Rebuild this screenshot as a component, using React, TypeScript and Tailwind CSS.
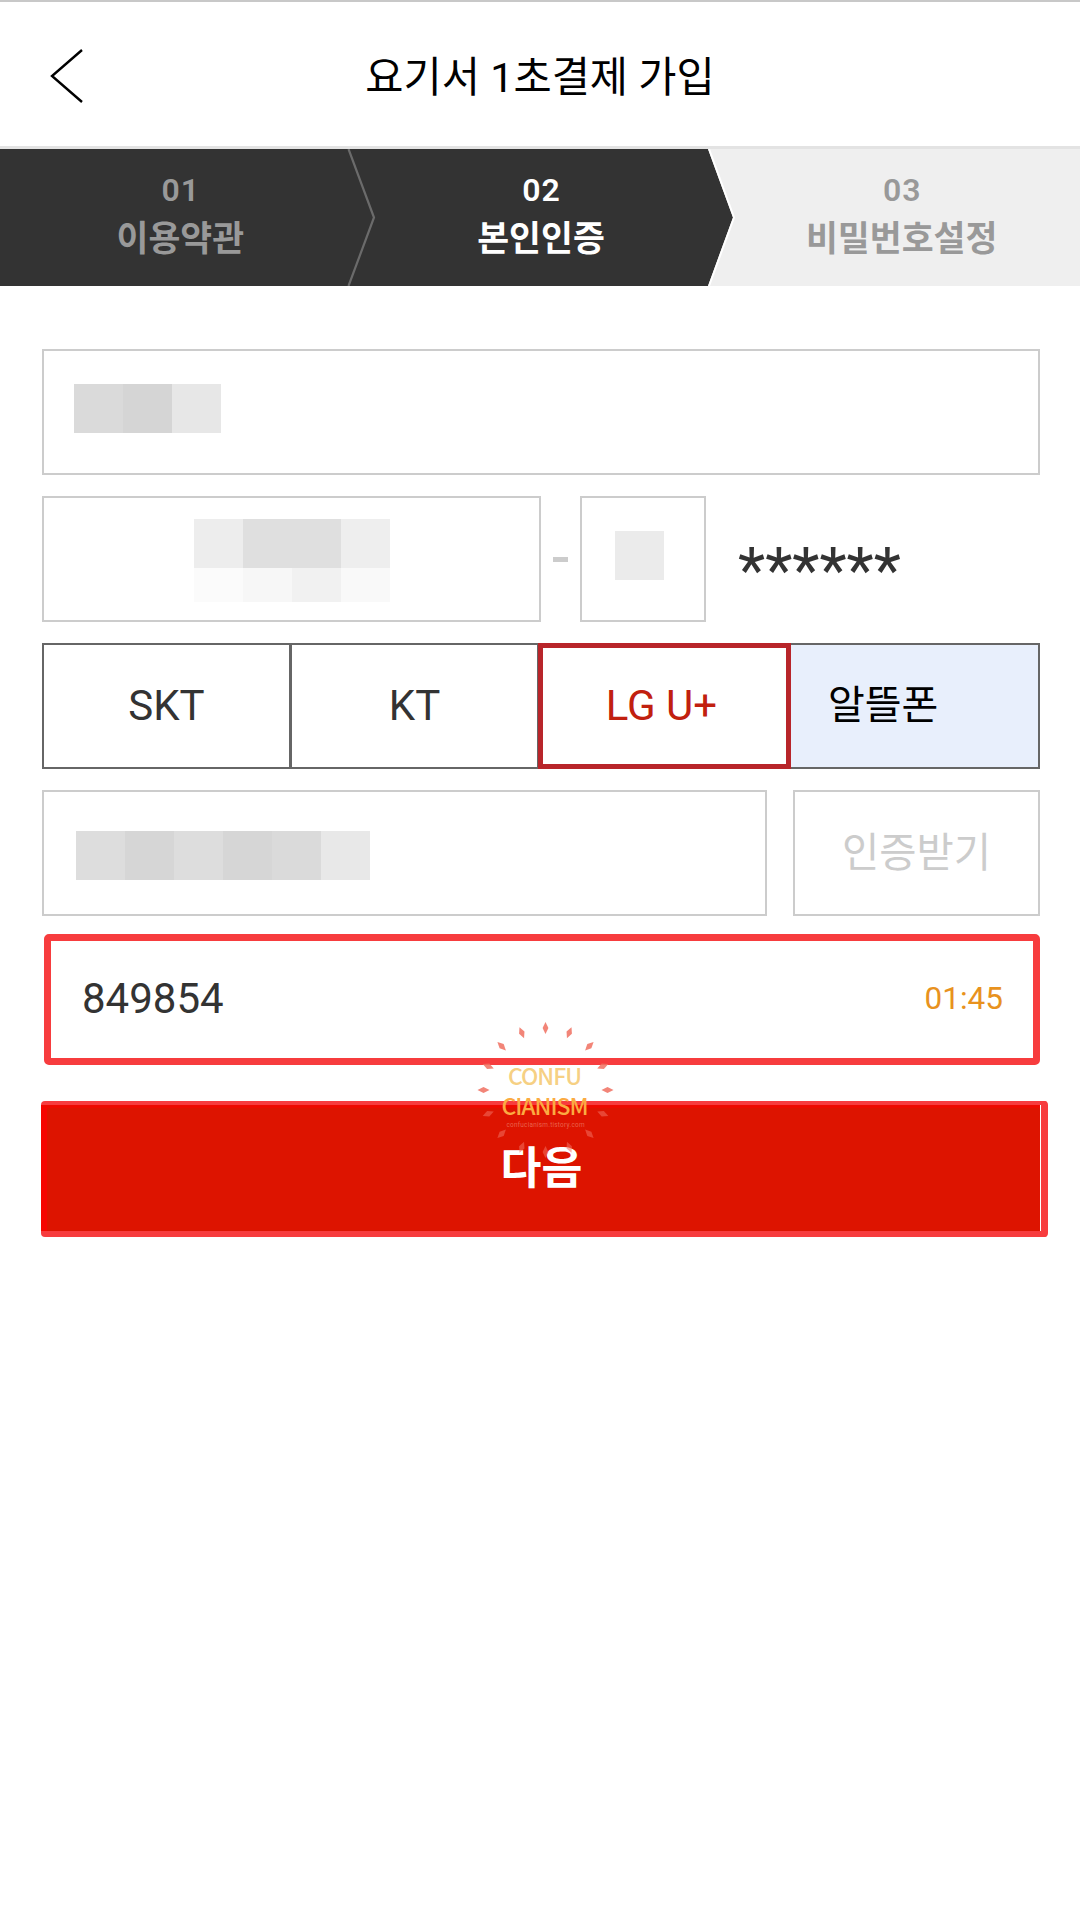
import React, { useState } from "react";

const steps = [
    { no: "01", label: "이용약관" },
    { no: "02", label: "본인인증" },
    { no: "03", label: "비밀번호설정" },
];

const carriers = ["SKT", "KT", "LG U+"];

// One shade per mosaic block
const nameBlocks = ["#dadada", "#d5d5d5", "#e7e7e7"];
const birthTop = ["#ededed", "#dfdfdf", "#dfdfdf", "#eeeeee"];
const birthBottom = ["#fbfbfb", "#f7f7f7", "#f1f1f1", "#f9f9f9"];
const phoneBlocks = ["#dddddd", "#d6d6d6", "#dddddd", "#d6d6d6", "#dadada", "#e8e8e8"];

function Mosaic({ shades, className = "h-[49px]" }: { shades: string[]; className?: string }) {
    return (
        <div className={`flex ${className}`}>
            {shades.map((shade, i) => (
                <span key={i} className="w-[49px] h-full" style={{ backgroundColor: shade }} />
            ))}
        </div>
    );
}

function Stepper() {
    return (
        <div className="relative h-[137px] bg-[#333333]">
            <svg className="absolute inset-0" width="1080" height="137" viewBox="0 0 1080 137" fill="none">
                <path d="M708 0L733 68.5L708 137H1080V0Z" fill="#efefef" />
                <path d="M709 0L734 68.5L709 137" stroke="#ffffff" strokeWidth="2" />
                <path d="M348.5 0L374 68.5L348.5 137" stroke="#6b6b6b" strokeWidth="2.2" />
            </svg>
            <ol className="relative grid grid-cols-3 h-full -mr-[2px] text-center font-bold">
                {steps.map((step, i) => (
                    <li key={step.no} className={i === 1 ? "text-white" : "text-[#999999]"}>
                        <p className="pt-[21px] pl-[1px] text-[32px] leading-[40px] tracking-[1px] font-semibold">{step.no}</p>
                        <p className="pt-[6px] text-[34.7px] leading-[46px]">{step.label}</p>
                    </li>
                ))}
            </ol>
        </div>
    );
}

function Watermark() {
    const rays = Array.from({ length: 16 }, (_, i) => i * 22.5);
    return (
        <svg
            className="absolute left-[475px] top-[1020px] pointer-events-none"
            width="141"
            height="141"
            viewBox="-70.5 -70 141 141"
        >
            {rays.map((angle) => (
                <path
                    key={angle}
                    d="M0 -68L2.9 -62L0 -56L-2.9 -62Z"
                    transform={`rotate(${angle})`}
                    fill="#f07060"
                    fillOpacity={angle > 90 && angle < 270 ? 0.55 : 0.85}
                />
            ))}
            <g textAnchor="middle" fontFamily="'Noto Sans CJK KR', sans-serif">
                <text x="-0.5" y="-5.5" fontSize="23" textLength="74" fontWeight="500" fill="#f6d083">CONFU</text>
                <text x="-0.5" y="25" fontSize="23" textLength="87" fontWeight="500" fill="#fbab42">CIANISM</text>
            </g>
            <text x="0" y="36.5" fontSize="6.4" textLength="78" textAnchor="middle" fill="#ee7a62" fillOpacity="0.8">
                confucianism.tistory.com
            </text>
        </svg>
    );
}

export default function App() {
    const [selected, setSelected] = useState("LG U+");

    return (
        <div className="relative w-[1080px] h-[1920px] bg-white overflow-hidden font-[Roboto,'Noto_Sans_CJK_KR',sans-serif] text-[#333333]">
            <header className="flex items-center h-[149px] border-t-2 border-t-[#c8c8c8] border-b-3 border-b-[#e3e3e3]">
                <button type="button" className="w-[120px] pl-[48px]">
                    <svg width="40" height="60" viewBox="0 0 40 60" fill="none" stroke="#000" strokeWidth="2.4">
                        <path d="M34 6L4 32L34 58" />
                    </svg>
                </button>
                <h1 className="flex-1 pr-[120px] pt-[8px] text-center text-[41.5px] leading-[60px] text-black">요기서 1초결제 가입</h1>
            </header>

            <Stepper />

            <main className="pl-[42px] pt-[63px]">
                {/* Name */}
                <div className="flex w-[998px] h-[126px] border-2 border-[#cccccc] pl-[30px] pt-[33px]">
                    <Mosaic shades={nameBlocks} />
                </div>

                {/* Birth date and gender digit */}
                <div className="flex items-center mt-[21px] h-[126px]">
                    <div className="w-[499px] h-full border-2 border-[#cccccc] pl-[150px] pt-[21px]">
                        <Mosaic shades={birthTop} />
                        <Mosaic shades={birthBottom} className="h-[34px]" />
                    </div>
                    <span className="w-[15px] h-[5px] mx-[12px] bg-[#cccccc]" />
                    <div className="w-[126px] h-full border-2 border-[#cccccc] pl-[33px] pt-[33px]">
                        <Mosaic shades={["#ebebeb"]} />
                    </div>
                    <span className="pl-[32px] pt-[24px] text-[63px] leading-[70px]">******</span>
                </div>

                {/* Carrier */}
                <div className="flex mt-[21px] w-[998px] h-[126px] border-2 border-[#666666]">
                    {carriers.map((carrier) => (
                        <button
                            key={carrier}
                            type="button"
                            onClick={() => setSelected(carrier)}
                            className={
                                selected === carrier
                                    ? "w-[253px] h-[126px] -mt-[2px] -ml-[2px] pr-[6px] pb-[2px] border-5 border-[#b8252a] text-[42px] text-[#c1200f]"
                                    : "w-[248px] pb-[2px] text-[42px] border-r-3 border-[#666666]"
                            }
                        >
                            {carrier}
                        </button>
                    ))}
                    <button type="button" className="flex-1 bg-[#e8effc] pl-[37px] text-left text-[40px] text-black">
                        알뜰폰
                    </button>
                </div>

                {/* Phone number */}
                <div className="flex mt-[21px] gap-[26px] h-[126px]">
                    <div className="w-[725px] border-2 border-[#cccccc] pl-[32px] pt-[39px]">
                        <Mosaic shades={phoneBlocks} />
                    </div>
                    <button type="button" className="w-[247px] border-2 border-[#cccccc] text-[40.5px] text-[#cccccc]">
                        인증받기
                    </button>
                </div>

                {/* Verification code */}
                <div className="flex items-center justify-between mt-[18px] ml-[2px] w-[996px] h-[131px] pl-[31px] pr-[30px] pb-[2px] border-7 border-[#f73c3e] rounded-[5px]">
                    <span className="text-[42px]">849854</span>
                    <span className="text-[31.5px] text-[#e8921e]">01:45</span>
                </div>

                <div className="mt-[36px] -ml-[1px] w-[1007px] h-[136px] bg-white border-t-4 border-r-7 border-b-6 border-[#f73c3e] rounded-[4px]">
                    <button
                        type="button"
                        className="block w-[999px] h-[126px] pr-[4px] bg-[#dd1400] border-l-6 border-t-3 border-l-[#f60500] border-t-[#ee0a00] text-white text-[44.5px] font-bold"
                    >
                        다음
                    </button>
                </div>
            </main>

            <Watermark />
        </div>
    );
}
